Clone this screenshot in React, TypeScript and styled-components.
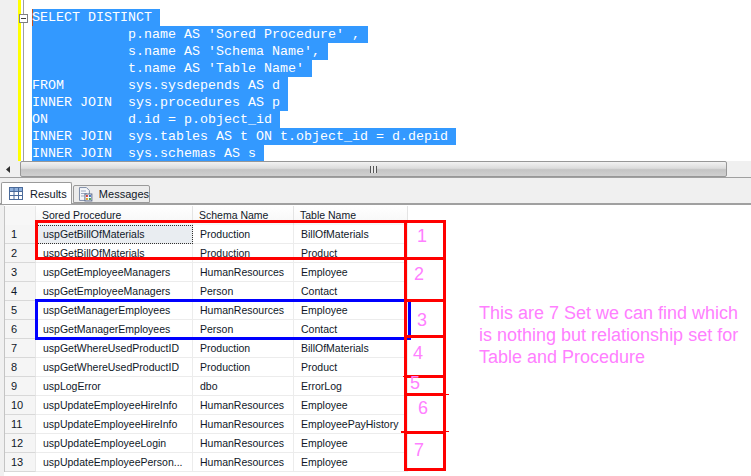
import styled, { createGlobalStyle } from 'styled-components';

const GlobalStyle = createGlobalStyle`
    html, body {
        margin: 0;
        padding: 0;
        background: #ffffff;
    }
`;

const sqlLines = [
    'SELECT DISTINCT',
    "            p.name AS 'Sored Procedure' ,",
    "            s.name AS 'Schema Name',",
    "            t.name AS 'Table Name'",
    'FROM        sys.sysdepends AS d',
    'INNER JOIN  sys.procedures AS p',
    'ON          d.id = p.object_id',
    'INNER JOIN  sys.tables AS t ON t.object_id = d.depid',
    'INNER JOIN  sys.schemas AS s',
];

const rows = [
    ['uspGetBillOfMaterials', 'Production', 'BillOfMaterials'],
    ['uspGetBillOfMaterials', 'Production', 'Product'],
    ['uspGetEmployeeManagers', 'HumanResources', 'Employee'],
    ['uspGetEmployeeManagers', 'Person', 'Contact'],
    ['uspGetManagerEmployees', 'HumanResources', 'Employee'],
    ['uspGetManagerEmployees', 'Person', 'Contact'],
    ['uspGetWhereUsedProductID', 'Production', 'BillOfMaterials'],
    ['uspGetWhereUsedProductID', 'Production', 'Product'],
    ['uspLogError', 'dbo', 'ErrorLog'],
    ['uspUpdateEmployeeHireInfo', 'HumanResources', 'Employee'],
    ['uspUpdateEmployeeHireInfo', 'HumanResources', 'EmployeePayHistory'],
    ['uspUpdateEmployeeLogin', 'HumanResources', 'Employee'],
    ['uspUpdateEmployeePerson...', 'HumanResources', 'Employee'],
];

const setLabels = [
    { text: '1', x: 417, y: 226 },
    { text: '2', x: 414, y: 264 },
    { text: '3', x: 417, y: 310 },
    { text: '4', x: 413, y: 343 },
    { text: '5', x: 410, y: 373 },
    { text: '6', x: 418, y: 398 },
    { text: '7', x: 414, y: 440 },
];

const App: React.FC = () => {
    return (
        <StyledPage>
            <GlobalStyle />
            <StyledEditor>
                <StyledGutter>
                    <StyledCollapse>
                        <svg width="9" height="9" viewBox="0 0 9 9">
                            <rect x="0.5" y="0.5" width="8" height="8" fill="#fff" stroke="#808080" />
                            <path d="M2 4.500h5" stroke="#404040" />
                        </svg>
                    </StyledCollapse>
                </StyledGutter>
                <StyledCode>
                    {sqlLines.map((line, index) => (
                        <StyledCodeLine key={index} $first={index === 0}>
                            {line}
                        </StyledCodeLine>
                    ))}
                </StyledCode>
            </StyledEditor>

            <StyledScrollbar>
                <StyledArrow>
                    <svg width="5" height="7" viewBox="0 0 5 7">
                        <path d="M4 0v7L0 3.5z" fill="#303030" />
                    </svg>
                </StyledArrow>
                <StyledThumb>
                    <StyledGrip />
                </StyledThumb>
            </StyledScrollbar>

            <StyledTabBar>
                <StyledTab $active>
                    <svg width="14" height="13" viewBox="0 0 14 13">
                        <rect x="0.5" y="0.5" width="13" height="12" fill="#fff" stroke="#4a6a9a" />
                        <rect x="1" y="1" width="12" height="3" fill="#8fb0dc" />
                        <path d="M1 4.500h12M1 8.500h12M5 1v11M9.500 1v11" stroke="#4a6a9a" />
                    </svg>
                    Results
                </StyledTab>
                <StyledTab>
                    <svg width="15" height="16" viewBox="0 0 15 16">
                        <path d="M1.500 1.500h7l3 3v10h-10z" fill="#f4f6fa" stroke="#7f8ea8" />
                        <path d="M3 5h5M3 7.500h6M3 10h3" stroke="#9aa8c0" />
                        <rect x="7" y="8" width="7" height="7" fill="#fff" stroke="#5a6a8a" />
                        <rect x="8" y="9" width="2" height="2" fill="#d04040" />
                        <rect x="11" y="9" width="2" height="2" fill="#3c70c0" />
                        <rect x="8" y="12" width="2" height="2" fill="#e0a030" />
                        <rect x="11" y="12" width="2" height="2" fill="#40a050" />
                    </svg>
                    Messages
                </StyledTab>
            </StyledTabBar>

            <StyledResults>
                <StyledGrid>
                    <StyledHeaderRow>
                        <StyledCorner />
                        <StyledHeaderCell>Sored Procedure</StyledHeaderCell>
                        <StyledHeaderCell>Schema Name</StyledHeaderCell>
                        <StyledHeaderCell>Table Name</StyledHeaderCell>
                    </StyledHeaderRow>
                    {rows.map((row, index) => (
                        <StyledRow key={index}>
                            <StyledRowNumber>{index + 1}</StyledRowNumber>
                            {row.map((cell, cellIndex) => (
                                <StyledCell key={cellIndex} $selected={index === 0 && cellIndex === 0}>
                                    {cell}
                                </StyledCell>
                            ))}
                        </StyledRow>
                    ))}
                </StyledGrid>
            </StyledResults>

            {/* hand drawn annotation marks on top of the screenshot */}
            <StyledMarks width="751" height="476" viewBox="0 0 751 476">
                <g fill="#0000ff">
                    <rect x="35" y="299" width="376" height="3" />
                    <rect x="35" y="337" width="376" height="3" />
                    <rect x="35" y="299" width="3" height="41" />
                    <rect x="408" y="299" width="3" height="41" />
                </g>
                <g fill="#ff0000">
                    <rect x="35" y="220" width="411" height="3" />
                    <rect x="35" y="257" width="411" height="3" />
                    <rect x="35" y="220" width="3" height="40" />
                    <rect x="404" y="220" width="3" height="250" />
                    <rect x="443" y="220" width="3" height="250" />
                    <rect x="404" y="299" width="42" height="3" />
                    <rect x="404" y="335" width="42" height="3" />
                    <rect x="404" y="375" width="42" height="3" />
                    <rect x="404" y="393" width="42" height="3" />
                    <rect x="404" y="431" width="42" height="3" />
                    <rect x="404" y="468" width="42" height="3" />
                    <rect x="403" y="376" width="2" height="1" />
                    <rect x="446" y="394" width="3" height="1" />
                    <rect x="401" y="431" width="3" height="2" />
                    <rect x="446" y="431" width="3" height="1" />
                </g>
            </StyledMarks>
            {setLabels.map((label) => (
                <StyledSetLabel key={label.text} $x={label.x} $y={label.y}>
                    {label.text}
                </StyledSetLabel>
            ))}
            <StyledNote>
                This are 7 Set we can find which
                <br />
                is nothing but relationship set for
                <br />
                Table and Procedure
            </StyledNote>
        </StyledPage>
    );
};

const StyledPage = styled.div`
    position: relative;
    width: 751px;
    height: 476px;
    overflow: hidden;
    display: flex;
    flex-direction: column;
    background: #ffffff;
`;

const StyledEditor = styled.div`
    height: 161px;
    display: flex;
    overflow: hidden;
    background: #ffffff;
`;

const StyledGutter = styled.div`
    box-sizing: border-box;
    width: 32px;
    flex-shrink: 0;
    padding: 14px 0 0 19px;
    background: linear-gradient(
        to right,
        #f0f0f0 0 18px,
        #ffff00 18px 21px,
        #ffffff 21px 23px,
        #a0a0a0 23px 24px,
        #ffffff 24px
    );
`;

const StyledCollapse = styled.div`
    width: 9px;
    height: 9px;
    line-height: 0;
`;

const StyledCode = styled.div`
    padding-top: 9px;
    display: flex;
    flex-direction: column;
    align-items: flex-start;
`;

const StyledCodeLine = styled.div<{ $first?: boolean }>`
    height: 17px;
    line-height: 17px;
    padding-right: 8px;
    white-space: pre;
    font-family: 'Liberation Mono', monospace;
    font-size: 13.33px;
    color: #ffffff;
    background: #3399ff;
    box-shadow: ${(props) => (props.$first ? 'inset 1px 0 0 #c05020' : 'none')};
`;

const StyledScrollbar = styled.div`
    box-sizing: border-box;
    height: 17px;
    display: flex;
    align-items: stretch;
    background: #f0f0f0;
    border-bottom: 1px solid #a0a0a0;
`;

const StyledArrow = styled.div`
    width: 20px;
    display: flex;
    align-items: center;
    justify-content: center;
    padding-right: 4px;
    box-sizing: border-box;
`;

const StyledThumb = styled.div`
    box-sizing: border-box;
    width: 707px;
    display: flex;
    align-items: center;
    justify-content: center;
    border: 1px solid #979797;
    border-radius: 2px;
    background: linear-gradient(to bottom, #f2f2f2, #dcdcdc 45%, #c4c4c4 55%, #d0d0d0);
`;

const StyledGrip = styled.div`
    width: 7px;
    height: 7px;
    background: repeating-linear-gradient(to right, #555555 0 1px, #e8e8e8 1px 3px);
`;

const StyledTabBar = styled.div`
    box-sizing: border-box;
    height: 27px;
    padding: 4px 0 0 1px;
    display: flex;
    align-items: flex-end;
    gap: 1px;
    background: #f0f0f0;
    border-bottom: 2px solid #a0a0a0;
`;

const StyledTab = styled.div<{ $active?: boolean }>`
    box-sizing: border-box;
    height: ${(props) => (props.$active ? '22px' : '18px')};
    margin-bottom: ${(props) => (props.$active ? '-1px' : '0')};
    width: ${(props) => (props.$active ? '71px' : '77px')};
    padding-left: ${(props) => (props.$active ? '7px' : '4px')};
    display: flex;
    align-items: center;
    gap: ${(props) => (props.$active ? '7px' : '6px')};
    font-family: 'Liberation Sans', Arial, sans-serif;
    font-size: 11px;
    color: #101828;
    background: ${(props) => (props.$active ? '#ffffff' : '#ececec')};
    border: 1px solid #9a9a9a;
    border-radius: 2px 2px 0 0;
    border-bottom: ${(props) => (props.$active ? 'none' : '1px solid #9a9a9a')};
`;

const StyledResults = styled.div`
    flex: 1;
    padding: 1px 0 0 4px;
    background: linear-gradient(to right, #f0f0f0 0 4px, #ffffff 4px);
    box-sizing: border-box;
`;

const StyledGrid = styled.div`
    display: flex;
    flex-direction: column;
    width: 404px;
    border-left: 1px solid #c4c4c4;
    box-sizing: border-box;
`;

const StyledRow = styled.div`
    height: 19px;
    display: grid;
    grid-template-columns: 31px 157px 101px 114px;
`;

const StyledHeaderRow = styled(StyledRow)`
    background: linear-gradient(to bottom, #ffffff, #f6f6f6);
`;

const StyledCorner = styled.div`
    border-right: 1px solid #e8e8e8;
    background: #f7f7f7;
`;

const StyledHeaderCell = styled.div`
    box-sizing: border-box;
    padding: 1px 0 0 6px;
    line-height: 17px;
    font-family: 'Liberation Sans', Arial, sans-serif;
    font-size: 10.5px;
    color: #101828;
    border-right: 1px solid #e4e4e4;
    white-space: nowrap;
`;

const StyledRowNumber = styled.div`
    box-sizing: border-box;
    padding-left: 6px;
    line-height: 18px;
    font-family: 'Liberation Sans', Arial, sans-serif;
    font-size: 11px;
    color: #101828;
    background: #f5f5f5;
    border-bottom: 1px solid #d8d8d8;
    border-right: 1px solid #e8e8e8;
`;

const StyledCell = styled.div<{ $selected?: boolean }>`
    box-sizing: border-box;
    padding-left: 7px;
    line-height: 18px;
    font-family: 'Liberation Sans', Arial, sans-serif;
    font-size: 10.5px;
    color: #101828;
    white-space: nowrap;
    overflow: hidden;
    border-right: 1px solid #ececec;
    border-bottom: 1px solid #ececec;
    background: ${(props) => (props.$selected ? '#e9edf1' : '#ffffff')};
    outline: ${(props) => (props.$selected ? '1px dotted #303030' : 'none')};
    outline-offset: -1px;
`;

const StyledMarks = styled.svg`
    position: absolute;
    left: 0;
    top: 0;
    pointer-events: none;
`;

const StyledSetLabel = styled.div<{ $x: number; $y: number }>`
    position: absolute;
    left: ${(props) => props.$x}px;
    top: ${(props) => props.$y}px;
    font-family: 'Liberation Sans', Arial, sans-serif;
    font-size: 18px;
    line-height: 20px;
    color: #ff80ff;
`;

const StyledNote = styled.div`
    position: absolute;
    left: 479px;
    top: 302px;
    font-family: 'Liberation Sans', Arial, sans-serif;
    font-size: 18px;
    line-height: 22px;
    color: #ff80ff;
    white-space: nowrap;
`;

export default App;
